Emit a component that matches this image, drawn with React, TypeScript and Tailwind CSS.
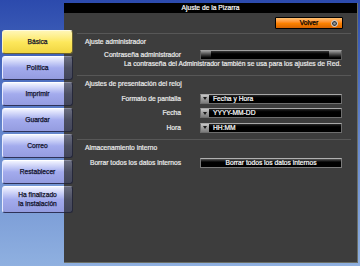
import React from "react";

function NavBtn({ label, active, tall }: { label: React.ReactNode; active?: boolean; tall?: boolean }) {
  return (
    <div className={`relative w-[71px] ${tall ? "h-[27px]" : "h-[24px]"} shrink-0`}>
      {active ? (
        <div className="absolute inset-0 rounded-[3px] border border-[#6b6230] border-t-[#fffbe0] border-l-[#fff6c0] bg-gradient-to-b from-[#fff6b4] via-[#fde85c] to-[#f0d540]" />
      ) : (
        <>
          <div className="absolute left-0 top-0 bottom-0 w-[62px] rounded-l-[3px] border border-r-0 border-[#2e3258] border-t-[#ffffff] border-l-[#e8ebff] bg-gradient-to-b from-[#f2f4ff] via-[#a3abed] to-[#949ce0]" />
          <div className="absolute left-[62px] top-0 bottom-0 right-0 rounded-r-[3px] border border-l-0 border-[#26283a] border-t-[#8a8da0] bg-gradient-to-b from-[#6a6d80] via-[#4c4f62] to-[#43465a]" />
        </>
      )}
      <div className="relative flex h-full items-center justify-center text-center text-[6.7px] leading-[8.5px] text-[#10122a] [-webkit-text-stroke:0.25px_#10122a]">
        {label}
      </div>
    </div>
  );
}

function Caret() {
  return (
    <div className="flex w-[8px] shrink-0 items-center justify-center bg-gradient-to-b from-[#c8c8c8] via-[#9c9c9c] to-[#7c7c7c]">
      <svg width="4" height="3" viewBox="0 0 4 3">
        <polygon points="0,0 4,0 2,3" fill="#1a1a1a" />
      </svg>
    </div>
  );
}

function Select({ value }: { value: string }) {
  return (
    <div className="flex h-[10px] w-[142px] border border-[#6e6e6e] border-t-[#a8a8a8] bg-black">
      <Caret />
      <div className="flex-1 bg-gradient-to-b from-[#2a2a2a] via-black to-black pl-[4px] text-[6.7px] leading-[8px] text-white">
        {value}
      </div>
    </div>
  );
}

function Label({ children }: { children: React.ReactNode }) {
  return <div className="w-[118px] shrink-0 pr-[1px] text-right text-[6.7px] leading-[8px] text-[#ececec]">{children}</div>;
}

function Sep() {
  return <div className="ml-[13px] mr-[6px] h-px shrink-0 bg-[#575757]" />;
}

function Header({ children }: { children: React.ReactNode }) {
  return <div className="mt-[4px] pl-[21px] text-[6.7px] leading-[8px] text-[#ececec]">{children}</div>;
}

export default function App() {
  return (
    <div className="relative h-[266px] w-[360px] overflow-hidden bg-gradient-to-b from-[#2c4aad] via-[#6586cc] to-[#8fb0e0] font-['Liberation_Sans',Arial,sans-serif] [-webkit-text-stroke:0.2px]">
      <div className="flex h-full pb-[3px] pr-[2px] pt-[3px]">
        <div className="relative z-10 flex w-[64px] shrink-0 flex-col gap-[2px] pl-[2px] pt-[27px]">
          <NavBtn label="Básica" active />
          <NavBtn label="Política" />
          <NavBtn label="Imprimir" />
          <NavBtn label="Guardar" />
          <NavBtn label="Correo" />
          <NavBtn label="Restablecer" />
          <NavBtn
            tall
            label={
              <span>
                Ha finalizado
                <br />
                la instalación
              </span>
            }
          />
        </div>
        <div className="flex flex-1 flex-col border-b border-r border-[#6b6f66] bg-[#3d3d3d]">
          <div className="flex h-[10px] shrink-0 items-center justify-center bg-black text-[6.7px] leading-[8px] text-white">
            Ajuste de la Pizarra
          </div>
          <div className="mt-[4px] flex shrink-0 justify-end pr-[14px]">
            <div className="relative flex h-[12px] w-[68px] items-center justify-center rounded-[1px] border border-black bg-gradient-to-b from-[#ffc070] via-[#ff8400] to-[#d86400]">
              <span className="text-[6.7px] leading-[8px] text-black [-webkit-text-stroke:0.25px_black]">Volver</span>
              <svg className="absolute right-[4px] top-[2px]" width="7" height="7" viewBox="0 0 7 7">
                <circle cx="3.5" cy="3.5" r="3" fill="#3a3a3a" stroke="#e8e8e8" strokeWidth="1" />
                <circle cx="3.5" cy="3.5" r="1.3" fill="#9a9a9a" />
              </svg>
            </div>
          </div>
          <div className="mt-[4px]">
            <Sep />
          </div>
          <Header>Ajuste administrador</Header>
          <div className="mt-[4px] flex h-[10px] items-center gap-[18px]">
            <Label>Contraseña administrador</Label>
            <div className="flex h-[10px] w-[142px] border border-[#5a5a5a] border-t-[#a0a0a0] bg-black">
              <div className="w-[10px] bg-gradient-to-b from-[#9a9a9a] via-[#3a3a3a] to-black" />
              <div className="flex-1 bg-gradient-to-b from-[#3a3a3a] via-black to-black" />
              <div className="w-[12px] bg-gradient-to-b from-[#9a9a9a] via-[#3a3a3a] to-black" />
            </div>
          </div>
          <div className="pr-[16px] text-right text-[6.7px] leading-[8px] text-[#ececec]">
            La contraseña del Administrador también se usa para los ajustes de Red.
          </div>
          <div className="mt-[7px]">
            <Sep />
          </div>
          <Header>Ajustes de presentación del reloj</Header>
          <div className="mt-[5.5px] flex flex-col gap-[4.5px]">
            <div className="flex items-center gap-[18px]">
              <Label>Formato de pantalla</Label>
              <Select value="Fecha y Hora" />
            </div>
            <div className="flex items-center gap-[18px]">
              <Label>Fecha</Label>
              <Select value="YYYY-MM-DD" />
            </div>
            <div className="flex items-center gap-[18px]">
              <Label>Hora</Label>
              <Select value="HH:MM" />
            </div>
          </div>
          <div className="mt-[6px]">
            <Sep />
          </div>
          <Header>Almacenamiento interno</Header>
          <div className="mt-[6px] flex items-center gap-[18px]">
            <Label>Borrar todos los datos internos</Label>
            <div className="flex h-[10px] w-[142px] items-center justify-center border border-[#7a7a7a] border-t-[#b0b0b0] bg-gradient-to-b from-[#5a5a5a] via-black to-black text-[6.7px] leading-[8px] text-white">
              Borrar todos los datos internos
            </div>
          </div>
        </div>
      </div>
    </div>
  );
}
